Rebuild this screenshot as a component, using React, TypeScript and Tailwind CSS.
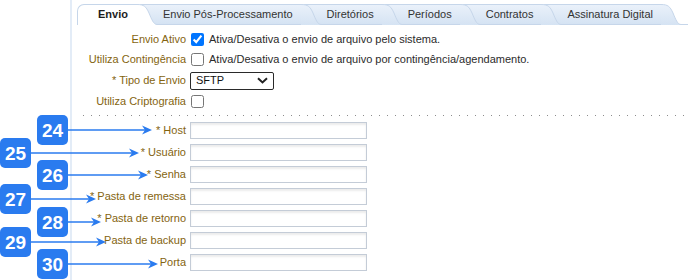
import React from 'react';

type Tab = { label: string; active?: boolean };

const tabs: Tab[] = [
  { label: 'Envio', active: true },
  { label: 'Envio Pós-Processamento' },
  { label: 'Diretórios' },
  { label: 'Períodos' },
  { label: 'Contratos' },
  { label: 'Assinatura Digital' },
];

const zClasses = ['z-[16]', 'z-[15]', 'z-[14]', 'z-[13]', 'z-[12]', 'z-[11]'];

const fields = [
  '* Host',
  '* Usuário',
  '* Senha',
  '* Pasta de remessa',
  '* Pasta de retorno',
  'Pasta de backup',
  'Porta',
];

// badge number, badge left, center y, arrow tip x
const callouts = [
  { n: 24, x: 37, y: 130, tip: 152 },
  { n: 25, x: 0, y: 153, tip: 139 },
  { n: 26, x: 37, y: 175, tip: 148 },
  { n: 27, x: 0, y: 199, tip: 96 },
  { n: 28, x: 37, y: 222, tip: 101 },
  { n: 29, x: 0, y: 242, tip: 106 },
  { n: 30, x: 37, y: 264, tip: 158 },
];

const Wing = ({ active, id }: { active?: boolean; id: string }) => (
  <svg width="20" height="21" viewBox="0 0 20 21" className="block shrink-0">
    <defs>
      <linearGradient id={id} x1="0" y1="0" x2="0" y2="1">
        <stop offset="0" stopColor="#eaf1fa" />
        <stop offset="1" stopColor="#d5e3f3" />
      </linearGradient>
    </defs>
    <path
      d="M0 0.5 C7 0.5 9 2.5 12 9 C14.5 15 16.5 20.5 20 20.5 L20 21 L0 21 Z"
      fill={active ? '#ffffff' : `url(#${id})`}
    />
    <path
      d="M0 0.5 C7 0.5 9 2.5 12 9 C14.5 15 16.5 20.5 20 20.5"
      fill="none"
      stroke="#c6d6ea"
      strokeWidth="1"
    />
  </svg>
);

const TabBar = () => (
  <div className="flex items-end pt-[4px] border-b border-[#c6d6ea]">
    {tabs.map((t, i) => (
      <div
        key={t.label}
        className={`relative flex shrink-0 ${zClasses[i]} ${i > 0 ? '-ml-[20px]' : ''} ${
          t.active ? '-mb-px h-[21px]' : 'h-[20px]'
        }`}
      >
        <div
          className={`flex items-center whitespace-nowrap border-t border-[#c6d6ea] ${
            t.active
              ? 'bg-white border-l rounded-tl-[7px] pl-[20px] pr-[9px] font-bold text-[#1e1e1e]'
              : 'bg-[linear-gradient(#eaf1fa,#d5e3f3)] pl-[26px] pr-[8px] text-[#333]'
          }`}
        >
          <span className="leading-none pb-[1px]">{t.label}</span>
        </div>
        <Wing active={t.active} id={`tabgrad${i}`} />
      </div>
    ))}
    <div className="flex-1" />
  </div>
);

const Label = ({ children }: { children: React.ReactNode }) => (
  <div className="text-right text-[#84640f] whitespace-nowrap">{children}</div>
);

const Checkbox = ({ checked }: { checked?: boolean }) => (
  <input
    type="checkbox"
    defaultChecked={checked}
    className="m-0 ml-px w-[13px] h-[13px] accent-[#0075ff]"
  />
);

const TextInput = () => (
  <div className="w-[177px] h-[17px] border border-[#c4ccd7] bg-white shadow-[inset_0_2px_2px_rgba(0,0,0,0.08)]" />
);

const App = () => {
  return (
    <div className="relative w-[688px] h-[280px] overflow-hidden bg-white text-[11px] text-[#2b2b2b] font-['Liberation_Sans',Arial,sans-serif]">
      <div className="ml-[70px] h-full border-l-2 border-[#e3ecf7] pl-[5px]">
        <TabBar />

        <div className="grid grid-cols-[109px_1fr] gap-x-[4px] items-center pt-[4px]">
          <div className="contents">
            <div className="h-[20px] flex items-center justify-end"><Label>Envio Ativo</Label></div>
            <div className="h-[20px] flex items-center gap-[5px]">
              <Checkbox checked />
              <span>Ativa/Desativa o envio de arquivo pelo sistema.</span>
            </div>
          </div>
          <div className="contents">
            <div className="h-[21px] flex items-center justify-end"><Label>Utiliza Contingência</Label></div>
            <div className="h-[21px] flex items-center gap-[5px]">
              <Checkbox />
              <span>Ativa/Desativa o envio de arquivo por contingência/agendamento.</span>
            </div>
          </div>
          <div className="contents">
            <div className="h-[21px] flex items-center justify-end"><Label>* Tipo de Envio</Label></div>
            <div className="h-[21px] flex items-center">
              <div className="w-[84px] h-[18px] border border-[#2a2a2a] rounded-[2px] flex items-center justify-between pl-[5px] pr-[5px] text-[#111]">
                <span>SFTP</span>
                <svg width="11" height="7" viewBox="0 0 11 7">
                  <path d="M1 1.2 L5.5 5.4 L10 1.2" fill="none" stroke="#222" strokeWidth="2" />
                </svg>
              </div>
            </div>
          </div>
          <div className="contents">
            <div className="h-[20px] flex items-center justify-end"><Label>Utiliza Criptografia</Label></div>
            <div className="h-[20px] flex items-center">
              <Checkbox />
            </div>
          </div>
        </div>

        <div className="mt-[4px] ml-[6px] h-px bg-[linear-gradient(to_right,#8c8c8c_1px,transparent_1px)] bg-[length:8px_1px]" />

        <div className="grid grid-cols-[109px_1fr] gap-x-[4px] items-center pt-[3px]">
          {fields.map((f) => (
            <div key={f} className="contents">
              <div className="h-[22px] flex items-center justify-end"><Label>{f}</Label></div>
              <div className="h-[22px] flex items-center">
                <TextInput />
              </div>
            </div>
          ))}
        </div>
      </div>

      {/* callout annotations */}
      <svg className="absolute inset-0 pointer-events-none" width="688" height="280">
        {callouts.map((c) => (
          <g key={c.n}>
            <line x1={c.x + 30} y1={c.y} x2={c.tip - 6} y2={c.y} stroke="#2a7bef" strokeWidth="1.5" />
            <polygon
              points={`${c.tip},${c.y} ${c.tip - 10},${c.y - 4.5} ${c.tip - 7},${c.y} ${c.tip - 10},${c.y + 4.5}`}
              fill="#2a7bef"
            />
          </g>
        ))}
      </svg>
      {callouts.map((c) => (
        <div
          key={c.n}
          className="absolute w-[31px] h-[30px] rounded-[5px] bg-[#2a7bef] text-white font-bold text-[19px] flex items-center justify-center leading-none"
          style={{ left: c.x, top: c.y - 15 }}
        >
          {c.n}
        </div>
      ))}
    </div>
  );
};

export default App;
